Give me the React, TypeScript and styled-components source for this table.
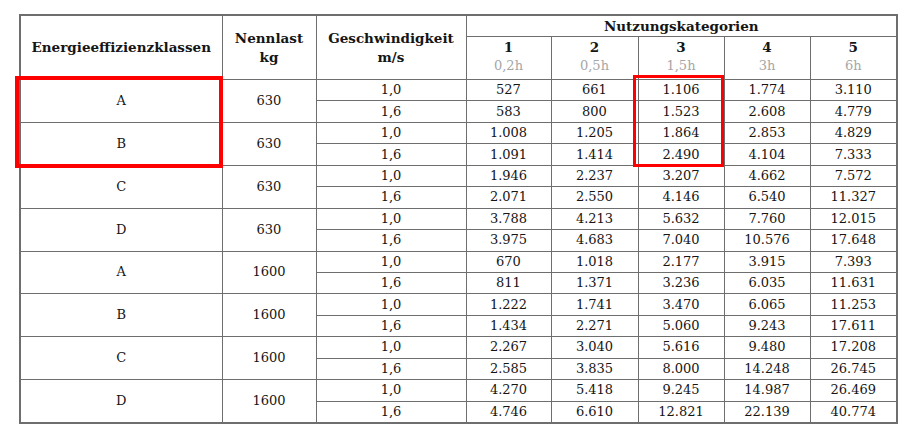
import React from 'react';
import styled, { createGlobalStyle } from 'styled-components';

const GlobalStyle = createGlobalStyle`
  body {
    margin: 0;
    background: #fff;
    font-family: 'DejaVu Serif', 'Liberation Serif', serif;
    color: #151515;
  }
`;

const Page = styled.div`
  padding: 14px 0 0 19px;
`;

const Frame = styled.div`
  position: relative;
  width: 877px;
`;

const Table = styled.table`
  width: 877px;
  border-collapse: collapse;
  table-layout: fixed;
  border: 2px solid #6e6e6e;
  font-size: 13px;
`;

const Th = styled.th`
  border: 1px solid #6e6e6e;
  font-weight: bold;
  font-size: 13.5px;
  text-align: center;
  vertical-align: middle;
  padding: 0;
  line-height: 19px;
`;

const TopHead = styled(Th)`
  height: 20px;
  line-height: 20px;
`;

const NumHead = styled(Th)`
  height: 41px;
  vertical-align: top;
  padding-top: 1px;
  line-height: 18px;
`;

const Hours = styled.div`
  font-weight: normal;
  font-size: 13px;
  color: #a6a6a6;
  line-height: 20px;
`;

const Td = styled.td`
  border: 1px solid #6e6e6e;
  text-align: center;
  padding: 0;
  height: 20.45px;
  line-height: 20px;
`;

const Highlight = styled.div<{ $left: number; $top: number; $w: number; $h: number; $t: number }>`
  position: absolute;
  left: ${p => p.$left}px;
  top: ${p => p.$top}px;
  width: ${p => p.$w}px;
  height: ${p => p.$h}px;
  border: ${p => p.$t}px solid #ff0000;
  box-sizing: border-box;
  pointer-events: none;
`;

type Group = { cls: string; load: string; rows: [string, string[]][] };

const groups: Group[] = [
  { cls: 'A', load: '630', rows: [['1,0', ['527', '661', '1.106', '1.774', '3.110']], ['1,6', ['583', '800', '1.523', '2.608', '4.779']]] },
  { cls: 'B', load: '630', rows: [['1,0', ['1.008', '1.205', '1.864', '2.853', '4.829']], ['1,6', ['1.091', '1.414', '2.490', '4.104', '7.333']]] },
  { cls: 'C', load: '630', rows: [['1,0', ['1.946', '2.237', '3.207', '4.662', '7.572']], ['1,6', ['2.071', '2.550', '4.146', '6.540', '11.327']]] },
  { cls: 'D', load: '630', rows: [['1,0', ['3.788', '4.213', '5.632', '7.760', '12.015']], ['1,6', ['3.975', '4.683', '7.040', '10.576', '17.648']]] },
  { cls: 'A', load: '1600', rows: [['1,0', ['670', '1.018', '2.177', '3.915', '7.393']], ['1,6', ['811', '1.371', '3.236', '6.035', '11.631']]] },
  { cls: 'B', load: '1600', rows: [['1,0', ['1.222', '1.741', '3.470', '6.065', '11.253']], ['1,6', ['1.434', '2.271', '5.060', '9.243', '17.611']]] },
  { cls: 'C', load: '1600', rows: [['1,0', ['2.267', '3.040', '5.616', '9.480', '17.208']], ['1,6', ['2.585', '3.835', '8.000', '14.248', '26.745']]] },
  { cls: 'D', load: '1600', rows: [['1,0', ['4.270', '5.418', '9.245', '14.987', '26.469']], ['1,6', ['4.746', '6.610', '12.821', '22.139', '40.774']]] },
];

const categories = [
  ['1', '0,2h'],
  ['2', '0,5h'],
  ['3', '1,5h'],
  ['4', '3h'],
  ['5', '6h'],
];

const widths = [202, 94, 150, 85, 87, 86, 86, 87];

export default function App() {
  return (
    <Page>
      <GlobalStyle />
      <Frame>
        <Table>
          <colgroup>
            {widths.map((w, i) => (
              <col key={i} style={{ width: w }} />
            ))}
          </colgroup>
          <thead>
            <tr>
              <Th rowSpan={2}>Energieeffizienzklassen</Th>
              <Th rowSpan={2}>
                Nennlast
                <br />
                kg
              </Th>
              <Th rowSpan={2}>
                Geschwindigkeit
                <br />
                m/s
              </Th>
              <TopHead colSpan={5}>Nutzungskategorien</TopHead>
            </tr>
            <tr>
              {categories.map(([n, h]) => (
                <NumHead key={n}>
                  {n}
                  <Hours>{h}</Hours>
                </NumHead>
              ))}
            </tr>
          </thead>
          <tbody>
            {groups.map((g, gi) =>
              g.rows.map(([speed, vals], ri) => (
                <tr key={`${gi}-${ri}`}>
                  {ri === 0 && <Td rowSpan={2}>{g.cls}</Td>}
                  {ri === 0 && <Td rowSpan={2}>{g.load}</Td>}
                  <Td>{speed}</Td>
                  {vals.map((v, vi) => (
                    <Td key={vi}>{v}</Td>
                  ))}
                </tr>
              ))
            )}
          </tbody>
        </Table>
        <Highlight $left={-4} $top={62} $w={208} $h={92} $t={4} />
        <Highlight $left={614} $top={61} $w={91} $h={92} $t={3} />
      </Frame>
    </Page>
  );
}
